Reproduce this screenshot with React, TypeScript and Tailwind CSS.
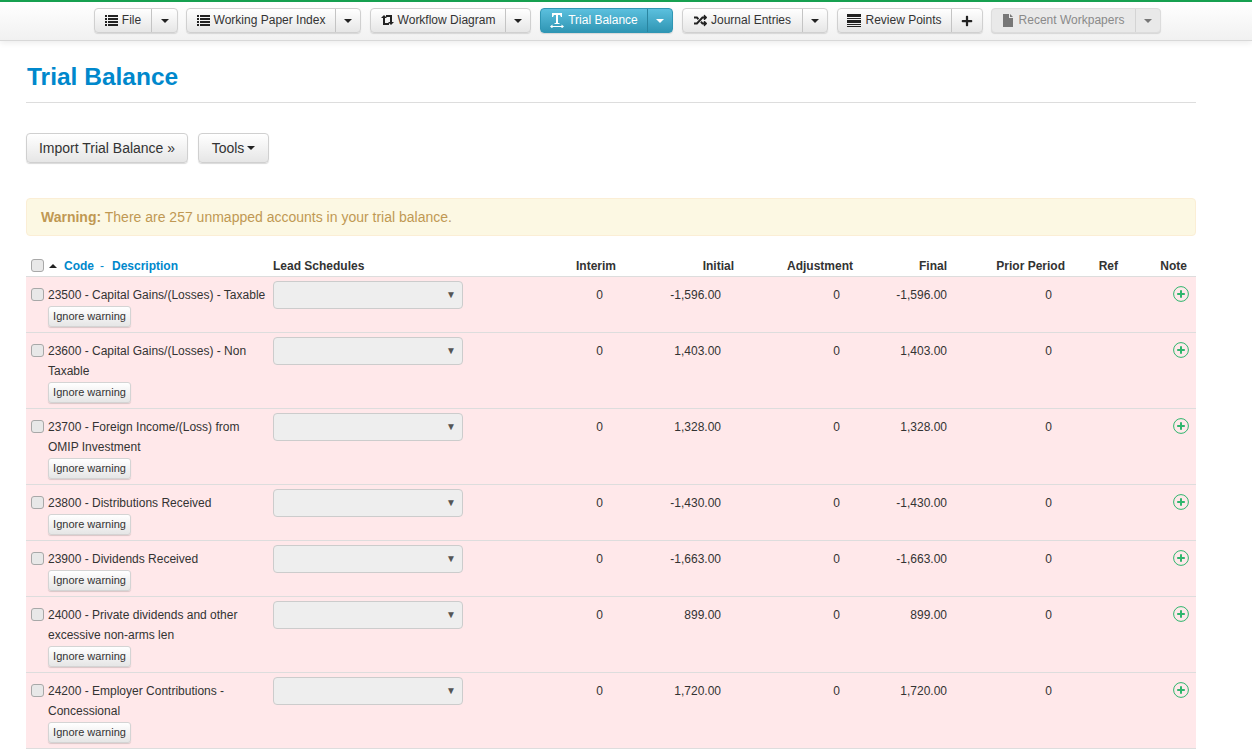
import React from 'react';
import { FaRandom, FaPlus } from 'react-icons/fa';

const Caret = ({ className = 'border-t-[#222]' }: { className?: string }) => (
  <span className={`inline-block w-0 h-0 border-x-[4px] border-x-transparent border-t-[4px] ${className}`} />
);

const ListIcon = () => (
  <svg width="13" height="12" viewBox="0 0 13 12" fill="#222">
    <rect x="0" y="1" width="2" height="2" />
    <rect x="3" y="1" width="10" height="2" />
    <rect x="0" y="4" width="2" height="2" />
    <rect x="3" y="4" width="10" height="2" />
    <rect x="0" y="7" width="2" height="2" />
    <rect x="3" y="7" width="10" height="2" />
    <rect x="0" y="10" width="2" height="2" />
    <rect x="3" y="10" width="10" height="2" />
  </svg>
);

const RetweetIcon = () => (
  <svg width="13" height="12" viewBox="0 0 13 12" fill="#222">
    <path d="M2 3h2v6h4v2H2z" />
    <path d="M0 4l3-3 3 3z" />
    <path d="M11 9H9V3H5V1h6z" />
    <path d="M13 8l-3 3-3-3z" />
  </svg>
);

const TextWidthIcon = () => (
  <svg width="14" height="15" viewBox="0 0 14 15" fill="currentColor">
    <path d="M2 0h10v4h-1l-1-2H8v8h1.5v1h-5v-1H6V2H4L3 4H2z" />
    <path d="M0 13.5l2.5-2v1.5h9v-1.5l2.5 2-2.5 2V14h-9v1.5z" />
  </svg>
);

const StackIcon = () => (
  <svg width="14" height="13" viewBox="0 0 14 13" fill="#222">
    <rect x="0" y="0" width="14" height="3" />
    <rect x="0" y="4" width="14" height="1" />
    <rect x="0" y="6" width="14" height="3" />
    <rect x="0" y="10" width="14" height="1" />
    <rect x="0" y="12" width="14" height="1" />
  </svg>
);

const FileIcon = () => (
  <svg width="10" height="13" viewBox="0 0 10 13" fill="#777" className="mr-[2px]">
    <path d="M0 0h6v4h4v9H0z" />
    <path d="M7 0l3 3H7z" />
  </svg>
);

type NavItem = {
  label: string;
  icon: React.ReactNode;
  main: string;
  side: string;
  gap: string;
  variant?: 'active' | 'disabled';
  plus?: boolean;
};

const navItems: NavItem[] = [
  { label: 'File', icon: <ListIcon />, main: 'w-[56px]', side: 'w-[26px]', gap: 'mr-[8px]' },
  { label: 'Working Paper Index', icon: <ListIcon />, main: 'w-[148px]', side: 'w-[25px]', gap: 'mr-[9px]' },
  { label: 'Workflow Diagram', icon: <RetweetIcon />, main: 'w-[134px]', side: 'w-[25px]', gap: 'mr-[9px]' },
  { label: 'Trial Balance', icon: <TextWidthIcon />, main: 'w-[106px]', side: 'w-[25px]', gap: 'mr-[9px]', variant: 'active' },
  { label: 'Journal Entries', icon: <FaRandom size={13} />, main: 'w-[119px]', side: 'w-[25px]', gap: 'mr-[9px]' },
  { label: 'Review Points', icon: <StackIcon />, main: 'w-[113px]', side: 'w-[31px]', gap: 'mr-[8px]', plus: true },
  { label: 'Recent Workpapers', icon: <FileIcon />, main: 'w-[143px]', side: 'w-[25px]', gap: '', variant: 'disabled' },
];

const NavButton = ({ item }: { item: NavItem }) => {
  const tone =
    item.variant === 'active'
      ? 'bg-gradient-to-b from-[#5bc0de] to-[#2f96b4] border-[#2f96b4] text-white'
      : item.variant === 'disabled'
        ? 'bg-[#e9e9e9] border-[#dcdcdc] text-[#8a8a8a]'
        : 'bg-gradient-to-b from-white to-[#e6e6e6] border-[#d0d0d0] text-[#333]';
  const divider =
    item.variant === 'active' ? 'border-[#2a85a0]' : item.variant === 'disabled' ? 'border-[#d4d4d4]' : 'border-[#c4c4c4]';
  return (
    <div className={`flex h-[25px] rounded-[4px] border shadow-[0_1px_1px_rgba(0,0,0,0.12)] text-[12px] ${item.gap} ${tone}`}>
      <div className={`${item.main} flex items-center justify-center gap-[4px] whitespace-nowrap pb-[1px]`}>
        <span className={item.variant === 'active' ? 'text-white' : 'text-[#222]'}>{item.icon}</span>
        {item.label}
      </div>
      <div className={`${item.side} flex items-center justify-center border-l ${divider}`}>
        {item.plus ? (
          <FaPlus size={12} className="text-[#222]" />
        ) : (
          <Caret className={item.variant === 'active' ? 'border-t-white' : item.variant === 'disabled' ? 'border-t-[#777]' : 'border-t-[#222]'} />
        )}
      </div>
    </div>
  );
};

const Check = () => (
  <input type="checkbox" className="appearance-none w-[13px] h-[13px] rounded-[3px] bg-[#e8e8e8] border border-[#a8a8a8] shrink-0" />
);

const PlusCircle = () => (
  <svg width="16" height="16" viewBox="0 0 16 16" fill="none">
    <circle cx="8" cy="8" r="7.4" stroke="#2fb56d" strokeWidth="1" />
    <path d="M8 4.2v7.6M4.2 8h7.6" stroke="#2fb56d" strokeWidth="2" />
  </svg>
);

const rows = [
  { text: '23500 - Capital Gains/(Losses) - Taxable', initial: '-1,596.00' },
  { text: '23600 - Capital Gains/(Losses) - Non Taxable', initial: '1,403.00' },
  { text: '23700 - Foreign Income/(Loss) from OMIP Investment', initial: '1,328.00' },
  { text: '23800 - Distributions Received', initial: '-1,430.00' },
  { text: '23900 - Dividends Received', initial: '-1,663.00' },
  { text: '24000 - Private dividends and other excessive non-arms len', initial: '899.00' },
  { text: '24200 - Employer Contributions - Concessional', initial: '1,720.00' },
];

const gridCols = 'grid grid-cols-[247px_200px_143px_118px_119px_94px_118px_53px_78px]';

export default function App() {
  return (
    <div className="h-[750px] overflow-hidden bg-white text-[#333] font-['Liberation_Sans',Arial,sans-serif]">
      {/* top toolbar */}
      <div className="h-[41px] border-t-2 border-t-[#16a050] border-b border-b-[#d8d8d8] bg-gradient-to-b from-white to-[#f1f1f1] shadow-[0_2px_6px_rgba(0,0,0,0.08)] pt-[6px] pl-[94px] flex">
        {navItems.map((item) => (
          <NavButton key={item.label} item={item} />
        ))}
      </div>

      <div className="w-[1170px] ml-[26px]">
        <h1 className="text-[24.5px] leading-[30px] font-bold text-[#0088cc] pt-[21px] pb-[10px] pl-[1px] border-b border-[#dddddd] h-[62px]">
          Trial Balance
        </h1>

        <div className="flex gap-[10px] mt-[30px]">
          <button className="h-[30px] w-[162px] text-[14px] rounded-[4px] border border-[#d0d0d0] bg-gradient-to-b from-white to-[#e6e6e6] shadow-[0_1px_1px_rgba(0,0,0,0.15)]">
            Import Trial Balance »
          </button>
          <button className="h-[30px] w-[71px] text-[14px] rounded-[4px] border border-[#d0d0d0] bg-gradient-to-b from-white to-[#e6e6e6] shadow-[0_1px_1px_rgba(0,0,0,0.15)] flex items-center justify-center gap-[3px]">
            Tools <Caret />
          </button>
        </div>

        <div className="mt-[35px] h-[38px] rounded-[4px] border border-[#fbeed5] bg-[#fcf8e3] text-[#c09853] text-[14px] leading-[36px] pl-[14px]">
          <b>Warning:</b> There are 257 unmapped accounts in your trial balance.
        </div>

        {/* table header */}
        <div className={`${gridCols} mt-[21px] h-[20px] border-b border-[#dddddd] text-[12px] leading-[18px] font-bold`}>
          <div className="flex items-start pl-[5px] text-[#0088cc]">
            <div className="h-[16px] flex items-center">
              <Check />
            </div>
            <span className="ml-[5px] mt-[7px] mr-[7px] w-0 h-0 border-x-[4px] border-x-transparent border-b-[4px] border-b-[#222]" />
            <span>Code</span>
            <span className="ml-[6px] mr-[8px] font-normal">-</span>
            <span>Description</span>
          </div>
          <div>Lead Schedules</div>
          <div className="text-right">Interim</div>
          <div className="text-right">Initial</div>
          <div className="text-right">Adjustment</div>
          <div className="text-right">Final</div>
          <div className="text-right">Prior Period</div>
          <div className="text-right">Ref</div>
          <div className="text-right pr-[9px]">Note</div>
        </div>

        {/* rows */}
        {rows.map((row) => (
          <div key={row.text} className={`${gridCols} bg-[#ffe8ea] border-b border-[#dddddd] text-[12px] leading-[20px]`}>
            <div className="flex pl-[5px] pt-[8px] pb-[5px]">
              <div className="h-[18px] flex items-center mr-[4px]">
                <Check />
              </div>
              <div className="w-[222px]">
                <div>{row.text}</div>
                <button className="block mt-[1px] h-[21px] w-[83px] text-[11px] leading-[19px] rounded-[3px] border border-[#d4d4d4] bg-gradient-to-b from-white to-[#e6e6e6] shadow-[0_1px_1px_rgba(0,0,0,0.15)]">
                  Ignore warning
                </button>
              </div>
            </div>
            <div className="pt-[4px]">
              <div className="h-[28px] w-[190px] rounded-[4px] border border-[#cccccc] bg-[#eeeeee] flex items-center justify-end pr-[6px] text-[10px] text-[#555]">
                ▼
              </div>
            </div>
            <div className="pt-[8px] pr-[13px] text-right">0</div>
            <div className="pt-[8px] pr-[13px] text-right">{row.initial}</div>
            <div className="pt-[8px] pr-[13px] text-right">0</div>
            <div className="pt-[8px] text-right">{row.initial}</div>
            <div className="pt-[8px] pr-[13px] text-right">0</div>
            <div />
            <div className="pt-[9px] pr-[7px] flex justify-end items-start">
              <PlusCircle />
            </div>
          </div>
        ))}
      </div>
    </div>
  );
}
